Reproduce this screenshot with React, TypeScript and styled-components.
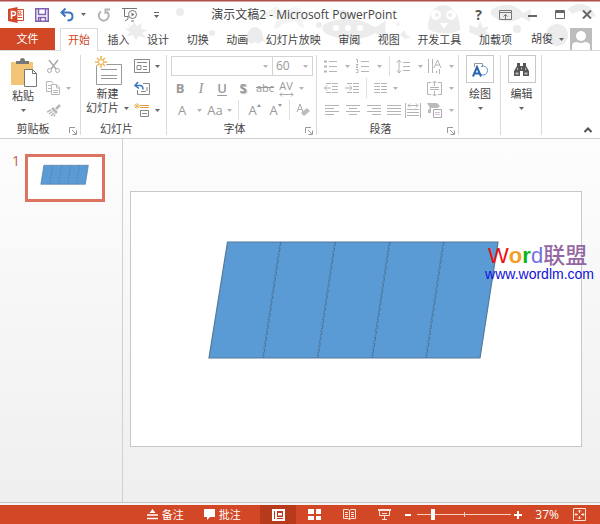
import React from 'react';
import styled, { createGlobalStyle, css } from 'styled-components';

const UI = '"Open Sans", "Noto Sans CJK SC", sans-serif';
const RED = '#d24726';
const LINE = '#dadada';
const INK = '#444';
const DIM = '#b4b4b4';

const Global = createGlobalStyle`
  * { box-sizing: border-box; }
  body { margin: 0; font: 11px/14px ${UI}; color: ${INK}; background: #fff; }
  button, select, input { font: inherit; color: inherit; margin: 0; padding: 0; border: 0; background: none; border-radius: 0; }
  svg { display: block; flex: none; }
`;

const Window = styled.div`
  min-height: 100vh;
  display: flex;
  flex-direction: column;
`;

const Head = styled.header`
  position: relative;
  border-top: 1px solid #b0504c;
  box-shadow: inset 0 1px #d9a5a2;
`;

const Doodles = styled.svg`
  position: absolute;
  top: 0;
  right: 0;
  pointer-events: none;
`;

const TitleBar = styled.div`
  position: relative;
  display: grid;
  grid-template-columns: 1fr auto 1fr;
  align-items: center;
  height: 27px;
  padding: 0 0 0 8px;
`;

const QuickBar = styled.div`
  display: flex;
  align-items: center;
  gap: 10px;
`;

const WindowBar = styled.div`
  display: flex;
  justify-content: flex-end;
`;

const PlainButton = styled.button`
  display: flex;
  align-items: center;
  justify-content: center;
  gap: 7px;
  height: 20px;
  min-width: 16px;
`;

const WindowButton = styled(PlainButton)`
  width: 27px;
  font: bold 14px/20px ${UI};
  color: #555;
`;

const Title = styled.h1`
  margin: 0;
  font-size: 12px;
  line-height: 20px;
  font-weight: 400;
`;

const TabBar = styled.nav`
  position: relative;
  display: flex;
  height: 22px;
  padding-right: 8px;
`;

const FileTab = styled.button`
  width: 55px;
  margin-right: 5px;
  background: ${RED};
  color: #fff;
`;

const Tabs = styled.div`
  flex: 1;
  display: flex;
  justify-content: space-between;
`;

const Tab = styled.button<{ $active?: boolean }>`
  height: 23px;
  padding: 0 7px;
  white-space: nowrap;
  border: 1px solid transparent;
  border-bottom: 0;
  ${(p) =>
    p.$active &&
    css`
      position: relative;
      z-index: 1;
      background: #fff;
      border-color: ${LINE};
      color: ${RED};
    `}
`;

const Account = styled.button`
  display: flex;
  align-items: center;
  gap: 6px;
  margin-left: 11px;
`;

const Ribbon = styled.section`
  display: flex;
  height: 89px;
  padding: 4px 0 3px;
  border-top: 1px solid ${LINE};
  border-bottom: 1px solid #d0d0d0;
`;

const Group = styled.div<{ $w: number }>`
  width: ${(p) => p.$w}px;
  display: flex;
  flex-direction: column;
  border-right: 1px solid ${LINE};
`;

const GroupBody = styled.div`
  flex: 1;
  display: flex;
`;

const GroupFoot = styled.div`
  position: relative;
  display: flex;
  justify-content: center;
  line-height: 12px;
  padding-right: 14px;
`;

const Launcher = styled.button`
  position: absolute;
  right: 3px;
  bottom: 0;
  color: #999;
`;

const BigButton = styled.button<{ $w: number }>`
  width: ${(p) => p.$w}px;
  display: flex;
  flex-direction: column;
  align-items: center;
  line-height: 14px;
`;

const BigLabel = styled.span`
  display: flex;
  align-items: center;
  gap: 5px;
  white-space: nowrap;
`;

const DropMark = styled.span`
  padding-top: 6px;
`;

const IconBox = styled.span`
  display: grid;
  place-items: center;
  width: 28px;
  height: 28px;
  margin-bottom: 4px;
  border: 1px solid #c8c8c8;
`;

const SmallColumn = styled.div`
  flex: 1;
  display: grid;
  grid-template-rows: repeat(3, 22px);
  justify-items: start;
`;

const SmallButton = styled.button`
  display: flex;
  align-items: center;
  gap: 5px;
`;

const ToolRows = styled.div`
  flex: 1;
  padding: 0 0 0 4px;
`;

const ToolRow = styled.div`
  display: flex;
  align-items: center;
  height: 22px;
  color: #999;
`;

const Tool = styled.button<{ $w?: number }>`
  display: flex;
  align-items: center;
  justify-content: center;
  width: ${(p) => p.$w ?? 21}px;
  height: 20px;
  font-size: 13px;
`;

const Bold = styled.b``;
const Italic = styled.i`
  font-family: 'Liberation Serif', serif;
  font-size: 15px;
`;
const Under = styled.u`
  font-weight: 600;
  text-underline-offset: 2px;
`;
const Shadowed = styled.b`
  text-shadow: 1px 1px 1px #bbb;
`;
const Struck = styled.s`
  font-size: 11px;
`;

const Spacing = styled.span`
  display: flex;
  flex-direction: column;
  align-items: center;
  font-size: 11px;
  line-height: 12px;
`;

const Divider = styled.span<{ $gap?: number }>`
  width: 1px;
  height: 20px;
  margin: 0 ${(p) => p.$gap ?? 4}px;
  background: #dedede;
`;

const Spacer = styled.span`
  flex: 1;
`;

const Combo = styled.label<{ $grow?: boolean }>`
  position: relative;
  display: flex;
  align-items: center;
  width: ${(p) => (p.$grow ? 102 : 41)}px;
  height: 20px;
  margin-right: -1px;
  padding-right: 4px;
  border: 1px solid #d4d4d4;
`;

const ComboSelect = styled.select`
  appearance: none;
  flex: 1;
  min-width: 0;
  padding-left: 3px;
  font-size: 12px;
  outline: 0;
`;

const RibbonEnd = styled.div`
  flex: 1;
  display: flex;
  align-items: flex-end;
  justify-content: flex-end;
  padding: 0 8px 0 0;
`;

const Workspace = styled.main`
  flex: 1;
  display: flex;
  background: linear-gradient(#fdfdfd, #efefef);
  border-bottom: 1px solid #c6c6c6;
`;

const SlideList = styled.aside`
  width: 123px;
  padding: 15px 0 0 12px;
  border-right: 1px solid #d0d0d0;
`;

const ThumbRow = styled.button`
  display: flex;
  align-items: flex-start;
  gap: 5px;
  font-size: 14px;
  line-height: 14px;
  color: #c4604a;
`;

const Thumb = styled.span`
  display: block;
  width: 80px;
  border: 3px solid #dc7460;
  background: #fff;
`;

const Stage = styled.div`
  flex: 1;
  padding: 52px 18px 0 7px;
`;

const Slide = styled.div`
  position: relative;
  border: 1px solid #c8c8c8;
  background: #fff;
`;

const Watermark = styled.div`
  position: absolute;
  top: 52px;
  right: -13px;
  font-family: 'Liberation Sans', 'Noto Sans CJK SC', sans-serif;
`;

const Brand = styled.div`
  padding-left: 3px;
  font-size: 22px;
  line-height: 23px;
`;

const Letter = styled.span<{ $c: string; $bold?: boolean }>`
  color: ${(p) => p.$c};
  font-weight: ${(p) => (p.$bold ? 700 : 500)};
`;

const SiteLink = styled.a`
  display: block;
  font-size: 14px;
  line-height: 14px;
  color: #1010d8;
  text-decoration: none;
`;

const StatusBar = styled.footer`
  display: flex;
  justify-content: flex-end;
  align-items: stretch;
  height: 21px;
  border-top: 2px solid #f4f4f4;
  padding-right: 14px;
  background: ${RED};
  color: #fff;
`;

const StatusButton = styled.button<{ $on?: boolean; $w?: number }>`
  display: flex;
  align-items: center;
  justify-content: center;
  gap: 4px;
  width: ${(p) => p.$w ?? 36}px;
  background: ${(p) => (p.$on ? '#b83a1d' : 'transparent')};
`;

const StatusText = styled(StatusButton)`
  width: 38px;
  margin-right: 19px;
`;

const Zoom = styled.label`
  position: relative;
  display: flex;
  align-items: center;
  width: 94px;
  margin: 0 3px;

  &::before {
    content: '';
    position: absolute;
    left: 50%;
    width: 1px;
    height: 5px;
    background: #f6cfc4;
  }
`;

const Range = styled.input`
  appearance: none;
  width: 100%;
  height: 14px;

  &::-webkit-slider-runnable-track {
    height: 1px;
    background: #f6cfc4;
  }
  &::-webkit-slider-thumb {
    appearance: none;
    width: 4px;
    height: 11px;
    margin-top: -5px;
    background: #fff;
  }
`;

const ZoomValue = styled.output`
  margin: 0 14px 0 13px;
  font-size: 12px;
  line-height: 19px;
`;

type IconProps = {
  w: number;
  h: number;
  c?: string;
  sw?: number;
  children: React.ReactNode;
};

const Icon = ({ w, h, c = DIM, sw = 1, children }: IconProps) => (
  <svg width={w} height={h} viewBox={`0 0 ${w} ${h}`} fill="none" stroke={c} strokeWidth={sw} aria-hidden="true">
    {children}
  </svg>
);

const Caret = ({ c = '#666' }: { c?: string }) => (
  <Icon w={5} h={3} c="none">
    <path d="M0 0h5L2.5 3z" fill={c} />
  </Icon>
);

const LauncherMark = () => (
  <Launcher aria-label="更多选项">
    <Icon w={8} h={8} c="#999">
      <path d="M.5 6V.5H6M3 3l4 4M7.500 3.500v4h-4" />
    </Icon>
  </Launcher>
);

const Drop = ({ w = 12 }: { w?: number }) => (
  <Tool $w={w} aria-label="展开">
    <Caret c={DIM} />
  </Tool>
);

const Lines = ({ spans }: { spans: number[][] }) => (
  <Icon w={14} h={11}>
    {spans.map(([a, b], i) => (
      <path key={i} d={`M${a} ${i * 3 + 0.5}H${b}`} />
    ))}
  </Icon>
);

const Parallelogram = ({ mini }: { mini?: boolean }) => (
  <svg viewBox="0 0 450 254" width="100%" role="img" aria-label="平行四边形">
    <path d="M96.500 50H367L349 166H78Z" fill="#5b9bd5" stroke="#557a99" strokeWidth={mini ? 4 : 1.2} />
    {[150.5, 205, 259.500, 313.500].map((x) => (
      <g key={x} stroke="#466b8b" strokeWidth={mini ? 3 : 0.8} strokeDasharray={mini ? '10 8' : '4 2'}>
        <path d={`M${x - 0.5} 50L${x - 18} 166`} />
        {!mini && <path d={`M${x - 1.5} 50L${x - 19} 166`} strokeDashoffset="3" opacity=".7" />}
      </g>
    ))}
  </svg>
);

const tabs = ['开始', '插入', '设计', '切换', '动画', '幻灯片放映', '审阅', '视图', '开发工具', '加载项'];

export default function App() {
  return (
    <Window>
      <Global />
      <Head>
        <Doodles width="480" height="49" viewBox="0 0 480 49" fill="#ececec" aria-hidden="true">
          <circle cx="60" cy="11" r="4" />
          <path d="M7 22l4 4 3-5 3 4 5-3-1 6 7 1-6 3 4 5-7-2-3 4-3-5-7 2 4-5-5-3 5-1z" />
          <path d="M152 8c3-4 8-2 9 2l14-4c6 0 9 5 10 10l5 3-8 1 2 7-4-1-5-6-13 3-5 5-3-1 3-8-5-4-8 2-2-3z" opacity=".65" />
          <path d="M127 37c0-7 4-11 8-11s8 4 8 11l3 4-4-1-3 3-4-2-4 2-3-3-4 1z" />
          <circle cx="92" cy="32" r="3" />
          <circle cx="199" cy="24" r="3" />
          <path d="M206 22c12-5 35-6 48 4 5-1 8-4 12-7-1 7-1 12 2 18-5-1-9-4-13-5-13 9-37 7-48 1-6-3-6-9-1-11z" />
          <path d="M222 20l-3-11h7l3 10zM234 35l8 8h-12z" />
          <circle cx="216" cy="27" r="3" fill="#fff" />
          <circle cx="228" cy="27" r="3" fill="#fff" />
          <circle cx="240" cy="27" r="3" fill="#fff" />
          <path d="M280 34l4-5 3 5 4 2-6 2zM276 24l2-3 2 4z" />
          <path d="M308 28c0-15 6-24 15-24 10 0 17 11 17 25-9 5-23 5-32-1z" />
          <circle cx="316" cy="14" r="5" fill="#fff" />
          <circle cx="331" cy="14" r="5" fill="#fff" />
          <circle cx="317" cy="14" r="2" />
          <circle cx="330" cy="14" r="2" />
          <path d="M320 22l4 6 4-6z" fill="#fff" />
          <path d="M350 24l7 3 3-7 3 7 6-2-3 6 5 3-13 1-9-4z" />
          <path d="M371 9c11-8 25-6 32 3l8-4-1 13-8-5c-10 7-23 6-31-3z" />
          <path d="M448 8q10-9 22-2l6 9-4 1q-8-10-20-3z" />
          <circle cx="437" cy="34" r="11" />
          <circle cx="397" cy="28" r="4" />
        </Doodles>
        <TitleBar>
          <QuickBar>
            <PlainButton aria-label="PowerPoint">
              <Icon w={16} h={16} c={RED}>
                <path d="M9 2.500h6.500v11H9M10 8h4M10 10.500h4" />
                <circle cx="11.500" cy="5.500" r="1.500" />
                <path d="M0 2l9.500-2v16L0 14z" fill={RED} stroke="none" />
                <path d="M3.500 12V4.500h1.500q2.500 0 2.500 2T5 8.500H3.500" stroke="#fff" strokeWidth="1.500" />
              </Icon>
            </PlainButton>
            <PlainButton aria-label="保存">
              <Icon w={14} h={14} c="#8060b0">
                <path d="M.75.75h12.500v12.500H.75zM3.500 1v5.500h7V1M3.500 13V9.500h7V13M5.500 10v3" strokeWidth="1.500" />
              </Icon>
            </PlainButton>
            <PlainButton aria-label="撤消">
              <Icon w={14} h={14} c="#3c76bd" sw={2}>
                <path d="M5.500.5l-4 4 4 4M2 4.500h6.500q4 0 4 4t-5 4" />
              </Icon>
              <Caret />
            </PlainButton>
            <PlainButton aria-label="恢复">
              <Icon w={14} h={14} c={DIM}>
                <path d="M9.500 3.500A5 5 0 1 1 4 3.500" strokeWidth="2" />
                <path d="M8.500 6V1.500H13" strokeWidth="2" />
              </Icon>
            </PlainButton>
            <PlainButton aria-label="从头开始">
              <Icon w={16} h={15} c="#777">
                <path d="M0 1.500h15M2.500 2v7.500h4M6 10v2M3 14l3-2M9 14h3" />
                <circle cx="10.500" cy="7.500" r="4" />
                <path d="M9.500 5.500v4l3-2z" fill="#777" stroke="none" />
              </Icon>
            </PlainButton>
            <PlainButton aria-label="自定义">
              <Icon w={5} h={6} c="#666">
                <path d="M0 .5h5" />
                <path d="M0 3h5L2.500 6z" fill="#666" stroke="none" />
              </Icon>
            </PlainButton>
          </QuickBar>
          <Title>演示文稿2 - Microsoft PowerPoint</Title>
          <WindowBar>
            <WindowButton aria-label="帮助">?</WindowButton>
            <WindowButton aria-label="功能区显示选项">
              <Icon w={13} h={10} c="#777">
                <path d="M.5.5h12v9H.5zM1 2.500h11M6.500 9V4.500M4.500 6.500l2-2 2 2" />
              </Icon>
            </WindowButton>
            <WindowButton aria-label="最小化">
              <Icon w={9} h={4} c="#666" sw={2}>
                <path d="M0 3h9" />
              </Icon>
            </WindowButton>
            <WindowButton aria-label="最大化">
              <Icon w={10} h={9} c="#666">
                <path d="M.5.5h9v8h-9zM0 1.500h10M0 2.500h10" />
              </Icon>
            </WindowButton>
            <WindowButton aria-label="关闭">
              <Icon w={10} h={9} c="#666" sw={2}>
                <path d="M1 .5l8 8M9 .5l-8 8" />
              </Icon>
            </WindowButton>
          </WindowBar>
        </TitleBar>
        <TabBar>
          <FileTab>文件</FileTab>
          <Tabs>
            {tabs.map((t, i) => (
              <Tab key={t} $active={i === 0}>
                {t}
              </Tab>
            ))}
          </Tabs>
          <Account>
            胡俊
            <Caret />
            <Icon w={22} h={22} c="none">
              <path d="M0 0h22v22H0z" fill="#bdbdbd" />
              <circle cx="11" cy="8" r="5" fill="#fff" />
              <path d="M2 22v-4q0-4 5-4 4 2 8 0 5 0 5 4v4z" fill="#fff" />
            </Icon>
          </Account>
        </TabBar>
      </Head>

      <Ribbon>
        <Group $w={81}>
          <GroupBody>
            <BigButton $w={46}>
              <Icon w={28} h={34} c="#777">
                <path d="M2 7h22v23H2z" fill="#f3c677" stroke="none" />
                <path d="M7 9V6h4q0-3 2.500-3T16 6h4v3z" fill="#777" stroke="none" />
                <path d="M15.500 14.500h8l4 4v13h-12zM23.500 14.500v4h4" fill="#fff" />
              </Icon>
              <BigLabel>粘贴</BigLabel>
              <DropMark>
                <Caret />
              </DropMark>
            </BigButton>
            <SmallColumn>
              <SmallButton aria-label="剪切">
                <Icon w={15} h={15} c="#aaa">
                  <path d="M3 1l7 9M12 1L5 10" strokeWidth="1.500" />
                  <circle cx="3.500" cy="11.500" r="2" />
                  <circle cx="11.500" cy="11.500" r="2" />
                </Icon>
              </SmallButton>
              <SmallButton aria-label="复制">
                <Icon w={15} h={14} c="#b8b8b8">
                  <path d="M5 10.500H.5V.5h5l2 2M2 4.500h3M2 7.500h3M5.500 3.500h5l3 3v7h-8zM10.500 4v3h3M7 9.500h5M7 11.500h5" />
                </Icon>
                <Caret c={DIM} />
              </SmallButton>
              <SmallButton aria-label="格式刷">
                <Icon w={15} h={13} c="#b8b8b8">
                  <path d="M14 1l-4 4" strokeWidth="2.500" />
                  <path d="M7 3l5 5-2 2-5-5z" fill="#b8b8b8" stroke="none" />
                  <path d="M5 6L1 8M6.500 7.500L3 10M8 9l-3 3M9 10.500l-1 2" strokeWidth="1.500" />
                </Icon>
              </SmallButton>
            </SmallColumn>
          </GroupBody>
          <GroupFoot>
            剪贴板
            <LauncherMark />
          </GroupFoot>
        </Group>

        <Group $w={86}>
          <GroupBody>
            <BigButton $w={53}>
              <Icon w={30} h={32} c="#999">
                <path d="M3.500 9.500h25v20h-25z" fill="#fff" />
                <path d="M8 14.500h16M8 20.500h16M8 23.500h16" />
                <circle cx="8" cy="7" r="6" fill="#fff" stroke="none" />
                <path d="M8 1v12M2 7h12M4 3l8 8M12 3l-8 8" stroke="#eeb75a" strokeWidth="1.500" />
                <circle cx="8" cy="7" r="2.500" fill="#fff" stroke="#eeb75a" />
              </Icon>
              <BigLabel>新建</BigLabel>
              <BigLabel>
                幻灯片
                <Caret />
              </BigLabel>
            </BigButton>
            <SmallColumn>
              <SmallButton aria-label="版式">
                <Icon w={16} h={14} c="#888">
                  <path d="M.5.5h15v13H.5zM3 3.500h10M3 6.500h4v4H3zM9 7.500h4M9 10.500h4" />
                </Icon>
                <Caret />
              </SmallButton>
              <SmallButton aria-label="重置">
                <Icon w={16} h={14} c="#888">
                  <path d="M9 2.500h6.500v11h-12V9M7 10.500h5M13 6v4" />
                  <path d="M4 1L1 4.500l4 3M1.500 4.500H6q3 0 3 4" stroke="#3c76bd" strokeWidth="1.500" />
                </Icon>
              </SmallButton>
              <SmallButton aria-label="节">
                <Icon w={16} h={15} c="#888">
                  <path d="M6 2.500h9M6 4.500h9" stroke="#e39b50" />
                  <path d="M6.500 7.500h8v6h-8zM8 10.500h5" />
                  <path d="M3 0v6M0 3h6M1 1l4 4M5 1L1 5" stroke="#eeb75a" />
                </Icon>
                <Caret />
              </SmallButton>
            </SmallColumn>
          </GroupBody>
          <GroupFoot>幻灯片</GroupFoot>
        </Group>

        <Group $w={150}>
          <ToolRows>
            <ToolRow>
              <Combo $grow>
                <ComboSelect aria-label="字体名称">
                  <option> </option>
                </ComboSelect>
                <Caret c={DIM} />
              </Combo>
              <Combo>
                <ComboSelect aria-label="字号">
                  <option>60</option>
                </ComboSelect>
                <Caret c={DIM} />
              </Combo>
            </ToolRow>
            <ToolRow>
              <Tool $w={18}><Bold>B</Bold></Tool>
              <Tool $w={24}><Italic>I</Italic></Tool>
              <Tool $w={18}><Under>U</Under></Tool>
              <Tool $w={24}><Shadowed>S</Shadowed></Tool>
              <Tool $w={20}><Struck>abc</Struck></Tool>
              <Tool $w={22} aria-label="字符间距">
                <Spacing>
                  AV
                  <Icon w={15} h={5} c="#aaa">
                    <path d="M1 2.500h13M3 .5l-2 2 2 2M12 .5l2 2-2 2" />
                  </Icon>
                </Spacing>
              </Tool>
              <Drop w={8} />
            </ToolRow>
            <ToolRow>
              <Tool $w={22}>A</Tool>
              <Drop />
              <Tool $w={20}>Aa</Tool>
              <Drop w={8} />
              <Divider $gap={5} />
              <Tool aria-label="增大字号">
                A
                <Icon w={4} h={12}><path d="M0 3l2-3 2 3z" fill="#999" stroke="none" /></Icon>
              </Tool>
              <Tool aria-label="减小字号">
                A
                <Icon w={4} h={12}><path d="M0 0l2 3 2-3z" fill="#999" stroke="none" /></Icon>
              </Tool>
              <Divider $gap={3} />
              <Tool aria-label="清除格式">
                <Icon w={15} h={14} c="#aaa">
                  <path d="M1 9l3-8 3 8M2 6.500h4" />
                  <path d="M5 10l6-5 3 3-6 5z" fill="#bbb" stroke="none" />
                </Icon>
              </Tool>
            </ToolRow>
          </ToolRows>
          <GroupFoot>
            字体
            <LauncherMark />
          </GroupFoot>
        </Group>

        <Group $w={142}>
          <ToolRows>
            <ToolRow>
              <Tool $w={20} aria-label="项目符号">
                <Icon w={14} h={13}>
                  <path d="M5 1.500h8M5 6.500h8M5 11.500h8" />
                  <path d="M0 1.500h3M0 6.500h3M0 11.500h3" strokeWidth="2" />
                </Icon>
              </Tool>
              <Drop />
              <Tool $w={20} aria-label="编号">
                <Icon w={14} h={14}>
                  <path d="M5 2.500h8M5 7.500h8M5 12.500h8M0 .5h1.500V4M0 5.500h2l-2 3h2M0 10.500h2v3H0" />
                </Icon>
              </Tool>
              <Drop />
              <Divider />
              <Tool $w={18} aria-label="行距">
                <Icon w={14} h={15}>
                  <path d="M3 1v13M1 3.500L3 1l2 2.500M1 11.500L3 14l2-2.500M7 3.500h7M7 7.500h7M7 11.500h7" />
                </Icon>
              </Tool>
              <Spacer />
              <Drop w={8} />
              <Tool $w={20} aria-label="文字方向">
                <Icon w={15} h={15}>
                  <path d="M1.500 0v14M5.500 0v14M9.500 12v2M12.500 10v5M7 9l3.500-8L14 9M8 6h5" />
                </Icon>
              </Tool>
              <Drop w={14} />
            </ToolRow>
            <ToolRow>
              <Tool aria-label="减少缩进">
                <Icon w={15} h={11}>
                  <path d="M2 .5h5M8 .5h6M8 3.500h6M8 6.500h6M2 9.500h5M8 9.500h6M0 5h7M3 2.500L.5 5 3 7.500" />
                </Icon>
              </Tool>
              <Tool aria-label="增加缩进">
                <Icon w={15} h={11}>
                  <path d="M2 .5h5M8 .5h6M8 3.500h6M8 6.500h6M2 9.500h5M8 9.500h6M0 5h7M4.500 2.500L7 5 4.500 7.500" />
                </Icon>
              </Tool>
              <Divider $gap={3} />
              <Tool aria-label="分栏">
                <Icon w={13} h={11}>
                  <path d="M0 .5h6M7 .5h6M0 3.500h6M7 3.500h6M0 6.500h6M7 6.500h6M0 9.500h6M7 9.500h6" />
                </Icon>
              </Tool>
              <Drop w={8} />
              <Spacer />
              <Tool $w={20} aria-label="对齐文本">
                <Icon w={15} h={15}>
                  <path d="M4 1.500H.5v12H4M11 1.500h3.500v12H11M3 6.500h9M3 8.500h9M7.500 0v5M5.500 2l2-2 2 2M7.500 10v5M5.500 13l2 2 2-2" />
                </Icon>
              </Tool>
              <Drop w={14} />
            </ToolRow>
            <ToolRow>
              <Tool aria-label="左对齐"><Lines spans={[[0, 14], [0, 9], [0, 14], [0, 9]]} /></Tool>
              <Tool aria-label="居中"><Lines spans={[[0, 14], [3, 11], [0, 14], [3, 11]]} /></Tool>
              <Tool aria-label="右对齐"><Lines spans={[[0, 14], [5, 14], [0, 14], [5, 14]]} /></Tool>
              <Tool $w={20} aria-label="两端对齐"><Lines spans={[[0, 14], [0, 14], [0, 14], [0, 14]]} /></Tool>
              <Tool $w={18} aria-label="分散对齐">
                <Icon w={16} h={15}>
                  <path d="M.5 0v15M15.500 0v15M3 2.500h10M5 .5l-2 2 2 2M11 .5l2 2-2 2M2 6.500h12M2 9.500h12M2 12.500h12" />
                </Icon>
              </Tool>
              <Spacer />
              <Tool $w={20} aria-label="转换为 SmartArt">
                <Icon w={15} h={15} c="#aaa">
                  <path d="M0 0h10l3 3-2 2H4v5H1V7l2-2z" fill="#bbb" stroke="none" />
                  <path d="M6.500 6.500h8v8h-8z" fill="#fff" />
                  <path d="M8 9.500h5M8 11.500h5" stroke="#d3bfd8" />
                </Icon>
              </Tool>
              <Drop w={14} />
            </ToolRow>
          </ToolRows>
          <GroupFoot>
            段落
            <LauncherMark />
          </GroupFoot>
        </Group>

        <Group $w={42}>
          <BigButton $w={42}>
            <IconBox>
              <Icon w={16} h={15} c="#999">
                <path d="M2.500 5V1.500h8v3" />
                <path d="M9 4.500a4.500 4.500 0 1 1 0 8" stroke="#5b8fc8" />
                <path d="M1 14.500L5 5l4 9.500M2.500 11.500h5" stroke="#2a66ac" strokeWidth="2" />
              </Icon>
            </IconBox>
            <BigLabel>绘图</BigLabel>
            <DropMark>
              <Caret />
            </DropMark>
          </BigButton>
        </Group>
        <Group $w={41}>
          <BigButton $w={41}>
            <IconBox>
              <Icon w={15} h={13} c="none">
                <path d="M3 0h3v3h3V0h3v3l3 5v5h-6V8H6v5H0V8l3-5z" fill="#555" />
                <path d="M1.500 9.500h3v2h-3zM10.500 9.500h3v2h-3zM7 4.500h1v2H7zM3 5h1v2H3zM11 5h1v2h-1z" fill="#bbb" />
              </Icon>
            </IconBox>
            <BigLabel>编辑</BigLabel>
            <DropMark>
              <Caret />
            </DropMark>
          </BigButton>
        </Group>
        <RibbonEnd>
          <button aria-label="折叠功能区">
            <Icon w={8} h={8} c="#555" sw={2}>
              <path d="M.5 5L4 1.500 7.500 5" />
            </Icon>
          </button>
        </RibbonEnd>
      </Ribbon>

      <Workspace>
        <SlideList>
          <ThumbRow>
            1
            <Thumb>
              <Parallelogram mini />
            </Thumb>
          </ThumbRow>
        </SlideList>
        <Stage>
          <Slide>
            <Parallelogram />
            <Watermark>
              <Brand>
                <Letter $c="#ee1010">W</Letter>
                <Letter $c="#f0a028" $bold>o</Letter>
                <Letter $c="#10b418" $bold>r</Letter>
                <Letter $c="#7272e4">d</Letter>
                <Letter $c="#9468a2">联盟</Letter>
              </Brand>
              <SiteLink href="#">www.wordlm.com</SiteLink>
            </Watermark>
          </Slide>
        </Stage>
      </Workspace>

      <StatusBar>
        <StatusText>
          <Icon w={11} h={11} c="#fff">
            <path d="M2.500 4l3-4 3 4z" fill="#fff" stroke="none" />
            <path d="M0 6h11M0 9.500h11" strokeWidth="1.500" />
          </Icon>
          备注
        </StatusText>
        <StatusText>
          <Icon w={11} h={11} c="none">
            <path d="M0 0h11v8H6l-3 3V8H0z" fill="#fff" />
          </Icon>
          批注
        </StatusText>
        <StatusButton $on aria-label="普通视图">
          <Icon w={13} h={12} c="#fff" sw={2}>
            <path d="M1 1h11v10H1zM4 1v10" />
            <path d="M6 4h4v2.500H6z" fill="#fff" stroke="none" />
            <path d="M4 8.500h8" strokeWidth="1" />
          </Icon>
        </StatusButton>
        <StatusButton aria-label="幻灯片浏览">
          <Icon w={13} h={11} c="none">
            <path d="M0 0h6v5H0zM8 0h5v5H8zM0 7h6v4H0zM8 7h5v4H8z" fill="#fff" />
          </Icon>
        </StatusButton>
        <StatusButton $w={34} aria-label="阅读视图">
          <Icon w={13} h={11} c="#ffe3da">
            <path d="M.5.5H5l1.500 1L8 .5h4.500v9H8l-1.500 1-1.500-1H.5zM6.500 1.500v9M2 3.500h3M2 5.500h3M2 7.500h3M8 3.500h3M8 5.500h3M8 7.500h3" />
          </Icon>
        </StatusButton>
        <StatusButton aria-label="幻灯片放映">
          <Icon w={13} h={11} c="#ffe3da">
            <path d="M0 .5h13M0 1.500h13M1.500 2v4.500h10V2M4 4.500h5M6.500 7v3M4 10.500h5" />
          </Icon>
        </StatusButton>
        <StatusButton $w={12} aria-label="缩小">
          <Icon w={6} h={2} c="none">
            <path d="M0 0h6v2H0z" fill="#fff" />
          </Icon>
        </StatusButton>
        <Zoom>
          <Range type="range" min="0" max="100" defaultValue="15" aria-label="显示比例" />
        </Zoom>
        <StatusButton $w={8} aria-label="放大">
          <Icon w={8} h={8} c="#fff" sw={2}>
            <path d="M0 4h8M4 0v8" />
          </Icon>
        </StatusButton>
        <ZoomValue>37%</ZoomValue>
        <StatusButton $w={13} aria-label="适应窗口">
          <Icon w={13} h={13} c="#ffe3da">
            <path d="M.5.5h12v12H.5zM6.500 2v3M6.500 8v3M2 6.500h3M8 6.500h3M5 3.500l1.500-1.500L8 3.500M5 9.500L6.500 11 8 9.500M3.500 5L2 6.500 3.500 8M9.500 5L11 6.500 9.500 8" />
          </Icon>
        </StatusButton>
      </StatusBar>
    </Window>
  );
}
